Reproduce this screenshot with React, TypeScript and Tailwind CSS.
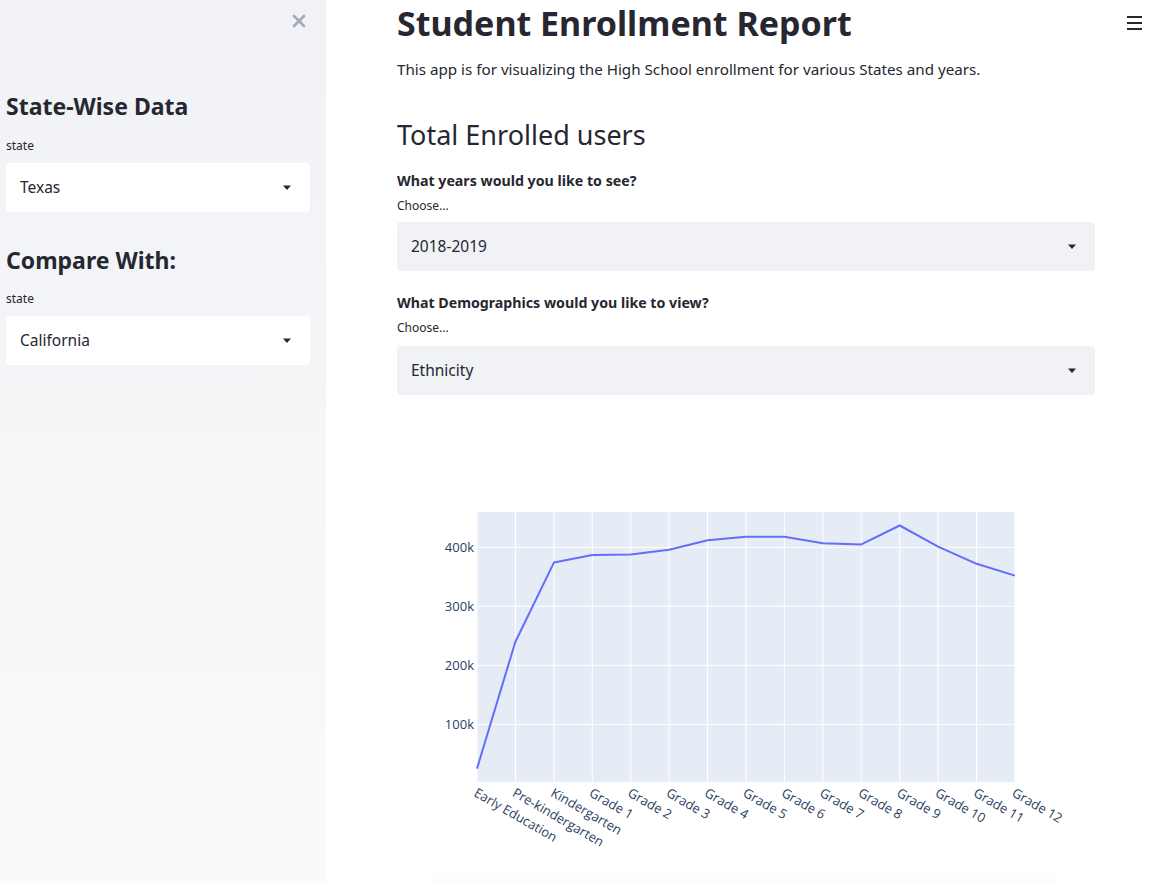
import { useMemo } from 'react';

const grades = [
  'Early Education',
  'Pre-kindergarten',
  'Kindergarten',
  'Grade 1',
  'Grade 2',
  'Grade 3',
  'Grade 4',
  'Grade 5',
  'Grade 6',
  'Grade 7',
  'Grade 8',
  'Grade 9',
  'Grade 10',
  'Grade 11',
  'Grade 12',
];

// enrolment per grade (approx. read off the original chart)
const values = [25000, 240000, 374000, 387000, 388000, 396000, 412000, 418000, 418000, 407000, 405000, 437000, 401000, 372000, 352000];

function Caret() {
  return (
    <svg width="10" height="6" viewBox="0 0 10 6" className="shrink-0">
      <path d="M1 0.5h8L5 5z" fill="#262730" />
    </svg>
  );
}

function SelectBox({ value, light }: { value: string; light?: boolean }) {
  return (
    <div
      className={`flex h-[49px] items-center justify-between rounded-[4px] pl-[14px] pr-[18px] text-[15.5px] text-[#262730] ${
        light ? 'bg-white' : 'bg-[#f0f2f6]'
      }`}
    >
      <span>{value}</span>
      <Caret />
    </div>
  );
}

function EnrollmentChart() {
  const W = 698;
  const H = 450;
  const left = 80;
  const right = 618;
  const top = 100;
  const bottom = 370;
  const step = (right - left) / (grades.length - 1);
  const y = (v: number) => 371.3 - (v / 100000) * 59;

  const points = useMemo(
    () => values.map((v, i) => `${(left + i * step).toFixed(1)},${y(v).toFixed(1)}`).join(' '),
    [step]
  );

  return (
    <svg width={W} height={H} viewBox={`0 0 ${W} ${H}`} className="block">
      <rect x={left} y={top} width={right - left} height={bottom - top} fill="#e5ecf6" />
      {grades.map((_, i) => (
        <line
          key={i}
          x1={left + i * step}
          x2={left + i * step}
          y1={top}
          y2={bottom}
          stroke="#fff"
          strokeWidth="1"
        />
      ))}
      {[100000, 200000, 300000, 400000].map((v) => (
        <line key={v} x1={left} x2={right} y1={y(v)} y2={y(v)} stroke="#fff" strokeWidth="1" />
      ))}
      <polyline points={points} fill="none" stroke="#636efa" strokeWidth="2" strokeLinejoin="round" />
      <g fontFamily="'Open Sans', verdana, arial, sans-serif" fontSize="13" fill="#2a3f5f">
        {[100000, 200000, 300000, 400000].map((v) => (
          <text key={v} x={77} y={y(v) + 4.5} textAnchor="end">
            {v / 1000}k
          </text>
        ))}
        {grades.map((g, i) => (
          <text key={g} transform={`translate(${left + i * step - 4},383.5) rotate(30)`}>
            {g}
          </text>
        ))}
      </g>
    </svg>
  );
}

export default function App() {
  return (
    <div className="flex h-screen overflow-hidden bg-white font-['Noto_Sans',sans-serif] text-[#262730]">
      {/* Sidebar */}
      <aside className="relative w-[326px] shrink-0 bg-gradient-to-b from-[#f0f2f6] to-[#fafafa] px-[6px] pr-[16px]">
        <button className="absolute right-[20px] top-[14px] text-[#a3a8b4]">
          <svg width="14" height="14" viewBox="0 0 14 14">
            <path d="M2 2l10 10M12 2L2 12" stroke="currentColor" strokeWidth="2.6" strokeLinecap="round" />
          </svg>
        </button>

        <h2 className="mt-[91px] text-[23px] font-bold leading-[30px]">State-Wise Data</h2>
        <div className="mt-[17px] text-[12px] leading-[16px]">state</div>
        <div className="mt-[9px]">
          <SelectBox value="Texas" light />
        </div>

        <h2 className="mt-[33px] text-[23px] font-bold leading-[30px]">Compare With:</h2>
        <div className="mt-[16px] text-[12px] leading-[16px]">state</div>
        <div className="mt-[9px]">
          <SelectBox value="California" light />
        </div>
      </aside>

      {/* Main */}
      <main className="relative flex-1">
        <button className="absolute right-[20px] top-[16px] flex flex-col gap-[4px]">
          <span className="block h-[2px] w-[15px] bg-[#262730]" />
          <span className="block h-[2px] w-[15px] bg-[#262730]" />
          <span className="block h-[2px] w-[15px] bg-[#262730]" />
        </button>

        <div className="ml-[71px] w-[698px]">
          <h1 className="pt-[1px] text-[34px] font-bold leading-[44px]">Student Enrollment Report</h1>
          <p className="mt-[12px] text-[15.2px] leading-[24px]">
            This app is for visualizing the High School enrollment for various States and years.
          </p>

          <h2 className="mt-[36px] text-[27px] font-normal leading-[36px]">Total Enrolled users</h2>

          <p className="mt-[17px] text-[14.2px] font-bold leading-[22px]">What years would you like to see?</p>
          <div className="mt-[6px] text-[12px] leading-[16px]">Choose...</div>
          <div className="mt-[8px]">
            <SelectBox value="2018-2019" />
          </div>

          <p className="mt-[21px] text-[14.2px] font-bold leading-[22px]">What Demographics would you like to view?</p>
          <div className="mt-[6px] text-[12px] leading-[16px]">Choose...</div>
          <div className="mt-[10px]">
            <SelectBox value="Ethnicity" />
          </div>

          <div className="mt-[17px]">
            <EnrollmentChart />
          </div>

          {/* next block, just below the fold */}
          <div className="mx-auto mt-[36px] h-[60px] w-[640px] rounded-[30px] bg-[#f4f4f4] shadow-[0_0_28px_10px_rgba(0,0,0,0.05)]" />
        </div>
      </main>
    </div>
  );
}
